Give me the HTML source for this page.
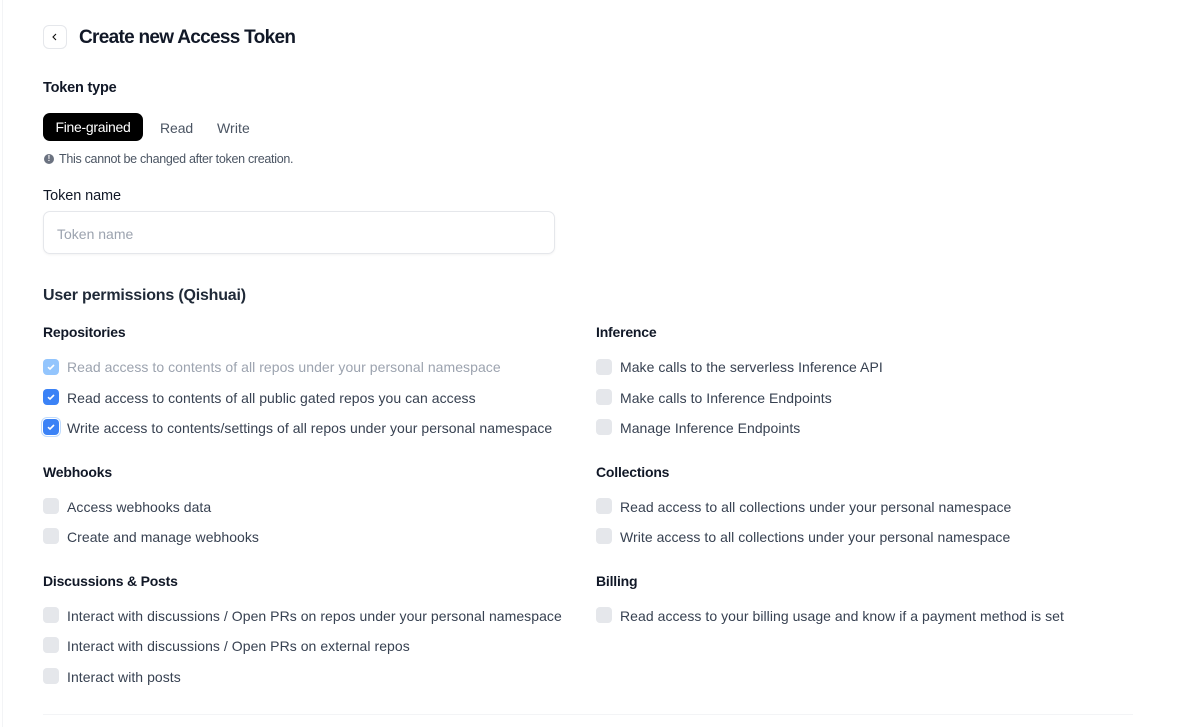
<!DOCTYPE html>
<html><head><meta charset="utf-8"><style>
*{margin:0;padding:0;box-sizing:border-box}
body{width:1192px;height:727px;background:#fff;font-family:"Liberation Sans",sans-serif;position:relative;overflow:hidden;color:#111827}
.a{position:absolute;white-space:nowrap}
.h{font-weight:bold;font-size:14px;color:#111827;letter-spacing:-0.2px}
.cb{position:absolute;width:16px;height:16px;border-radius:4px;background:#e5e7eb}
.cb.on{background:#3b82f6}
.cb.dis{background:#93c5fd}
.cb.on svg,.cb.dis svg{position:absolute;left:3px;top:3px}
.t{position:absolute;font-size:14px;color:#374151;letter-spacing:0.05px;white-space:nowrap}
</style></head><body>
<div class="a" style="left:2px;top:0;width:1px;height:727px;background:#f3f4f6"></div>
<div class="a" style="left:43px;top:25px;width:24px;height:24px;border:1px solid #e5e7eb;border-radius:6px;text-align:center;font-size:12px;line-height:22px;color:#111">
<svg width="10" height="10" viewBox="0 0 10 10" style="margin-top:6px"><path d="M6 2L3 5L6 8" stroke="#111" stroke-width="1.1" fill="none"/></svg></div>
<div class="a" style="left:79px;top:27px;font-size:19px;font-weight:bold;letter-spacing:-0.7px">Create new Access Token</div>
<div class="a h" style="left:43px;top:80px;font-size:14.5px">Token type</div>
<div class="a" style="left:43px;top:113px;width:100px;height:28px;background:#000;border-radius:7px;color:#fff;font-size:14px;line-height:29px;text-align:center;letter-spacing:-0.3px">Fine-grained</div>
<div class="a" style="left:160px;top:120px;font-size:14px;color:#4b5563;letter-spacing:-0.1px">Read</div>
<div class="a" style="left:217px;top:120px;font-size:14px;color:#4b5563;letter-spacing:0.1px">Write</div>
<div class="a" style="left:44px;top:154px;width:10px;height:10px;border-radius:50%;background:#6b7280;color:#fff;font-size:8px;line-height:10px;text-align:center;font-weight:bold">!</div>
<div class="a" style="left:59px;top:152px;font-size:12.5px;color:#4b5563;letter-spacing:-0.3px">This cannot be changed after token creation.</div>
<div class="a" style="left:43px;top:188px;font-size:14.5px;color:#111827;letter-spacing:-0.1px">Token name</div>
<div class="a" style="left:43px;top:211px;width:512px;height:43px;border:1px solid #e5e7eb;border-radius:7px;box-shadow:0 1px 2px rgba(0,0,0,.05)"></div>
<div class="a" style="left:57px;top:226px;font-size:14px;color:#9ca3af;letter-spacing:0px">Token name</div>
<div class="a" style="left:43px;top:287px;font-size:16px;font-weight:bold;letter-spacing:-0.2px;color:#1f2937">User permissions (Qishuai)</div>

<div class="a h" style="left:43px;top:324px">Repositories</div>
<div class="cb dis" style="left:43px;top:359px"><svg width="10" height="10" viewBox="0 0 10 10"><path d="M2 5.2L4 7L8 3" stroke="#fff" stroke-width="1.6" fill="none"/></svg></div>
<div class="t" style="left:67px;top:359px;color:#9ca3af">Read access to contents of all repos under your personal namespace</div>
<div class="cb on" style="left:43px;top:389px"><svg width="10" height="10" viewBox="0 0 10 10"><path d="M2 5.2L4 7L8 3" stroke="#fff" stroke-width="1.6" fill="none"/></svg></div>
<div class="t" style="left:67px;top:390px">Read access to contents of all public gated repos you can access</div>
<div class="cb on" style="left:43px;top:419px;box-shadow:0 0 0 1px #fff,0 0 0 2px #bfdbfe"><svg width="10" height="10" viewBox="0 0 10 10"><path d="M2 5.2L4 7L8 3" stroke="#fff" stroke-width="1.6" fill="none"/></svg></div>
<div class="t" style="left:67px;top:420px">Write access to contents/settings of all repos under your personal namespace</div>

<div class="a h" style="left:43px;top:464px">Webhooks</div>
<div class="cb" style="left:43px;top:498px"></div><div class="t" style="left:67px;top:499px">Access webhooks data</div>
<div class="cb" style="left:43px;top:528px"></div><div class="t" style="left:67px;top:529px">Create and manage webhooks</div>

<div class="a h" style="left:43px;top:573px">Discussions &amp; Posts</div>
<div class="cb" style="left:43px;top:607px"></div><div class="t" style="left:67px;top:608px">Interact with discussions / Open PRs on repos under your personal namespace</div>
<div class="cb" style="left:43px;top:637px"></div><div class="t" style="left:67px;top:638px">Interact with discussions / Open PRs on external repos</div>
<div class="cb" style="left:43px;top:668px"></div><div class="t" style="left:67px;top:669px">Interact with posts</div>

<div class="a h" style="left:596px;top:324px">Inference</div>
<div class="cb" style="left:596px;top:359px"></div><div class="t" style="left:620px;top:359px">Make calls to the serverless Inference API</div>
<div class="cb" style="left:596px;top:389px"></div><div class="t" style="left:620px;top:390px">Make calls to Inference Endpoints</div>
<div class="cb" style="left:596px;top:419px"></div><div class="t" style="left:620px;top:420px">Manage Inference Endpoints</div>

<div class="a h" style="left:596px;top:464px">Collections</div>
<div class="cb" style="left:596px;top:498px"></div><div class="t" style="left:620px;top:499px">Read access to all collections under your personal namespace</div>
<div class="cb" style="left:596px;top:528px"></div><div class="t" style="left:620px;top:529px">Write access to all collections under your personal namespace</div>

<div class="a h" style="left:596px;top:573px">Billing</div>
<div class="cb" style="left:596px;top:607px"></div><div class="t" style="left:620px;top:608px">Read access to your billing usage and know if a payment method is set</div>

<div class="a" style="left:43px;top:714px;width:1090px;height:1px;background:#f3f4f6"></div>
</body></html>
